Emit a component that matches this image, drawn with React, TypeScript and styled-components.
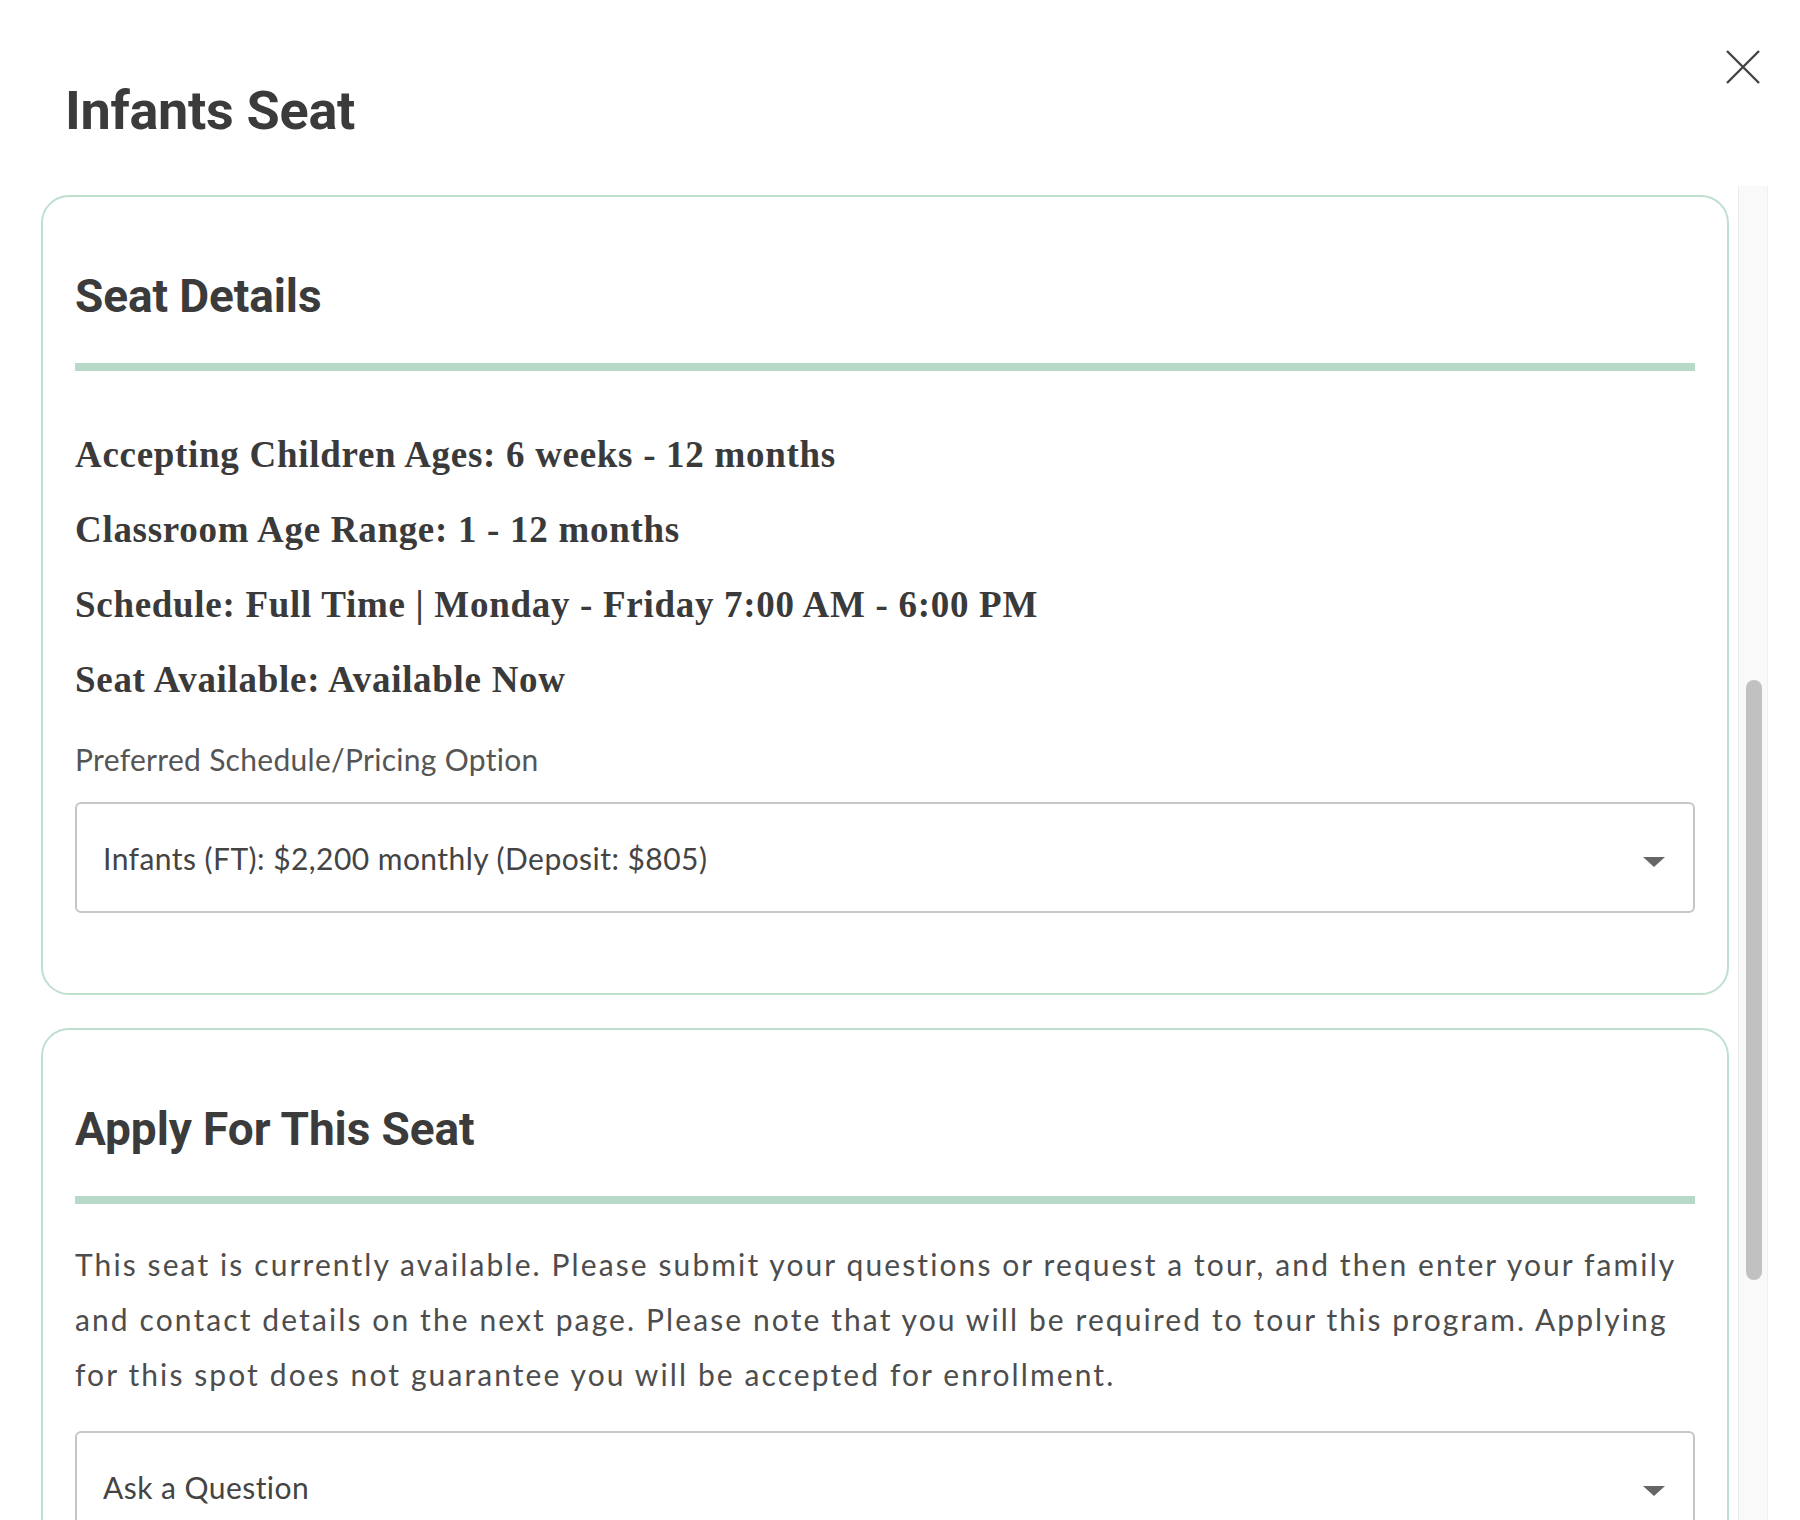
import React from 'react'
import styled, { createGlobalStyle } from 'styled-components'

const GlobalStyle = createGlobalStyle`
  html, body {
    margin: 0;
    padding: 0;
    background: #ffffff;
  }
  * {
    box-sizing: border-box;
  }
`

const Page = styled.div`
  width: 1800px;
  height: 1520px;
  overflow: hidden;
  display: flex;
  flex-direction: column;
  background: #ffffff;
`

const Header = styled.header`
  height: 186px;
  flex-shrink: 0;
  display: flex;
  justify-content: space-between;
  align-items: flex-start;
  padding: 50px 40px 0 65px;
`

const Title = styled.h1`
  margin: 34px 0 0;
  font-family: Roboto, 'Liberation Sans', sans-serif;
  font-weight: 700;
  font-size: 54px;
  line-height: 1;
  color: #3b3b3b;
  letter-spacing: -0.3px;
`

const CloseButton = styled.button`
  width: 34px;
  height: 34px;
  padding: 0;
  border: none;
  background: none;
  cursor: pointer;
  display: flex;
`

const Body = styled.div`
  flex: 1;
  display: flex;
  padding-right: 32px;
  min-height: 0;
`

const Content = styled.div`
  flex: 1;
  overflow: hidden;
  padding: 9px 9px 0 41px;
  display: flex;
  flex-direction: column;
  gap: 33px;
`

const ScrollTrack = styled.div`
  width: 30px;
  flex-shrink: 0;
  background: #f9f9f9;
  border-left: 1px solid #ececec;
  border-right: 1px solid #f0f0f0;
  padding: 0 6px 0 7px;
`

const ScrollThumb = styled.div`
  width: 16px;
  border-radius: 8px;
  background: #c1c1c1;
`

const Card = styled.section<{ $height?: number }>`
  flex-shrink: 0;
  border: 2px solid #bfdfcf;
  border-radius: 28px;
  padding: 76px 32px 80px;
  ${({ $height }) => ($height ? `height: ${$height}px;` : '')}
`

const CardTitle = styled.h2`
  margin: 0;
  font-family: Roboto, 'Liberation Sans', sans-serif;
  font-weight: 700;
  font-size: 46px;
  line-height: 1;
  color: #3b3b3b;
  letter-spacing: -0.1px;
`

const Divider = styled.hr`
  margin: 44px 0 0;
  border: none;
  height: 8px;
  background: #b7dac8;
`

const Facts = styled.div`
  margin-top: 46px;
`

const Fact = styled.p`
  margin: 0;
  font-family: 'Liberation Serif', 'Times New Roman', serif;
  font-weight: 700;
  font-size: 37px;
  line-height: 75px;
  color: #3a3a3a;
  letter-spacing: 0.7px;
`

const Label = styled.label`
  display: block;
  margin-top: 24px;
  font-family: Lato, 'Open Sans', sans-serif;
  font-size: 30px;
  line-height: 36px;
  color: #555555;
  letter-spacing: 0.3px;
`

const Select = styled.div<{ $gap: number }>`
  margin-top: ${({ $gap }) => $gap}px;
  height: 111px;
  border: 2px solid #c6c6c6;
  border-radius: 6px;
  display: flex;
  align-items: center;
  justify-content: space-between;
  padding: 0 28px 0 26px;
  background: #ffffff;
`

const SelectValue = styled.span`
  font-family: Lato, 'Open Sans', sans-serif;
  font-size: 30px;
  line-height: 36px;
  color: #444444;
  letter-spacing: 0.45px;
`

const Caret = styled.span`
  width: 0;
  height: 0;
  border-left: 11px solid transparent;
  border-right: 11px solid transparent;
  border-top: 10px solid #666666;
  margin-top: 8px;
`

const Intro = styled.p`
  margin: 33px 0 0;
  font-family: Lato, 'Open Sans', sans-serif;
  font-size: 30px;
  line-height: 55px;
  color: #4d4d4d;
  letter-spacing: 2.1px;
`

const CloseIcon = () => (
  <svg width="34" height="34" viewBox="0 0 34 34" fill="none">
    <path d="M1 1L33 33M33 1L1 33" stroke="#444444" strokeWidth="2.4" />
  </svg>
)

const facts = [
  'Accepting Children Ages: 6 weeks - 12 months',
  'Classroom Age Range: 1 - 12 months',
  'Schedule: Full Time | Monday - Friday 7:00 AM - 6:00 PM',
  'Seat Available: Available Now',
]

const App = (): JSX.Element => {
  return (
    <>
      <GlobalStyle />
      <Page>
        <Header>
          <Title>Infants Seat</Title>
          <CloseButton aria-label="Close">
            <CloseIcon />
          </CloseButton>
        </Header>
        <Body>
          <Content>
            <Card $height={800}>
              <CardTitle>Seat Details</CardTitle>
              <Divider />
              <Facts>
                {facts.map((fact) => (
                  <Fact key={fact}>{fact}</Fact>
                ))}
              </Facts>
              <Label>Preferred Schedule/Pricing Option</Label>
              <Select $gap={25}>
                <SelectValue>Infants (FT): $2,200 monthly (Deposit: $805)</SelectValue>
                <Caret />
              </Select>
            </Card>
            <Card>
              <CardTitle>Apply For This Seat</CardTitle>
              <Divider />
              <Intro>
                This seat is currently available. Please submit your questions or request a tour, and then enter
                your family and contact details on the next page. Please note that you will be required to tour
                this program. Applying for this spot does not guarantee you will be accepted for enrollment.
              </Intro>
              <Select $gap={29}>
                <SelectValue>Ask a Question</SelectValue>
                <Caret />
              </Select>
            </Card>
          </Content>
          <ScrollTrack>
            <ScrollThumb style={{ marginTop: 494, height: 600 }} />
          </ScrollTrack>
        </Body>
      </Page>
    </>
  )
}

export default App
